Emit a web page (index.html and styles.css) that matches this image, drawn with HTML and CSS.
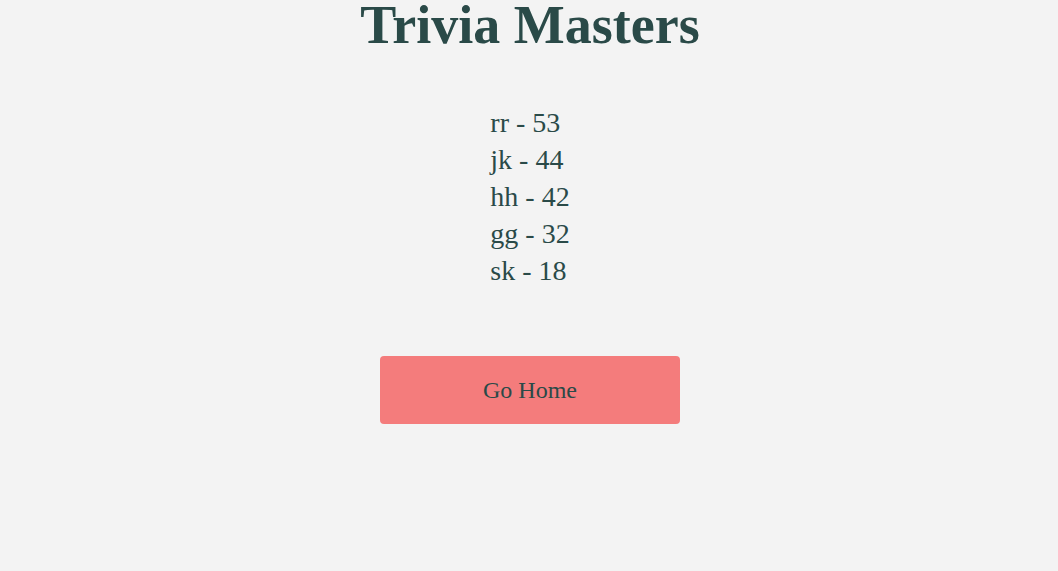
FILE: index.html
```html
<!DOCTYPE html>
<html>
<head>
<meta charset="utf-8">
<link rel="stylesheet" href="styles.css">
</head>
<body>
<main class="page">
  <h1 class="title">Trivia Masters</h1>
  <ul class="scores">
    <li>rr - 53</li>
    <li>jk - 44</li>
    <li>hh - 42</li>
    <li>gg - 32</li>
    <li>sk - 18</li>
  </ul>
  <button class="home-btn">Go Home</button>
</main>
</body>
</html>
```

FILE: styles.css
```css
html, body {
  margin: 0;
  padding: 0;
  background: #f3f3f3;
}
body {
  font-family: "Liberation Serif", "Times New Roman", serif;
  color: #2a4a48;
  height: 571px;
  overflow: hidden;
}
.page {
  display: flex;
  flex-direction: column;
  align-items: center;
  padding-left: 2px;
}
.title {
  margin: 0;
  font-size: 54px;
  font-weight: bold;
  line-height: 50px;
  color: #2a4a48;
}
.scores {
  list-style: none;
  margin: 54px 0 0 0;
  padding: 0;
  font-size: 28px;
  line-height: 37px;
  text-align: left;
}
.home-btn {
  margin-top: 67px;
  width: 300px;
  height: 68px;
  border: none;
  border-radius: 4px;
  background: #f47c7c;
  color: #2a4a48;
  font-family: "Liberation Serif", "Times New Roman", serif;
  font-size: 24px;
  cursor: pointer;
}
```
